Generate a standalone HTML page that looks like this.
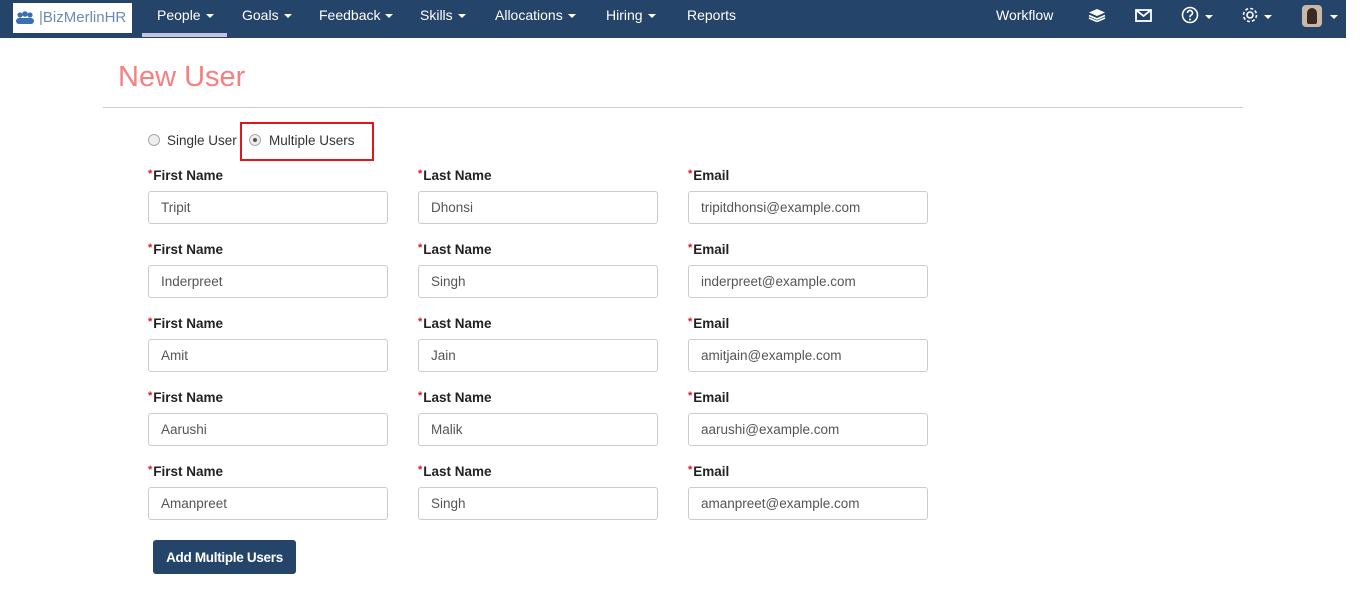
<!DOCTYPE html>
<html><head><meta charset="utf-8"><style>
*{box-sizing:border-box;margin:0;padding:0}
body{width:1360px;height:593px;background:#fff;font-family:"Liberation Sans",sans-serif;position:relative;overflow:hidden}
.nav{position:absolute;left:0;top:0;width:1346px;height:38px;background:#244469}
.logo{position:absolute;left:13px;top:3px;width:119px;height:30px;background:#fff;color:#6b8bb5;font-size:15px;line-height:30px;padding-left:26px}
.nav .i{position:absolute;top:0;line-height:31px;color:#fff;font-size:14px}
.car{display:inline-block;border-left:4px solid transparent;border-right:4px solid transparent;border-top:4px solid #fff;vertical-align:middle;margin-left:5px}
.ul{position:absolute;left:142px;top:33px;width:85px;height:4px;background:#c0c3e3}
h1{position:absolute;left:118px;top:61px;font-weight:normal;font-size:29px;color:#f77f7f}
.hr{position:absolute;left:103px;top:107px;width:1140px;height:1px;background:#ccc}
.rad{position:absolute;top:134px;width:12px;height:12px;border-radius:50%;border:1px solid #aaa;background:#eee}
.rl{position:absolute;top:133px;font-size:13.5px;color:#333}
.box{position:absolute;left:240px;top:122px;width:134px;height:39px;border:2px solid #e0161e}
.lb{position:absolute;font-size:13.5px;font-weight:bold;color:#222}
.lb b{color:#e0161e;font-size:11px;position:relative;top:-3px;margin-right:1px}
.in{position:absolute;width:240px;height:33px;border:1px solid #ccc;border-radius:3px;font-size:13.5px;color:#555;padding-left:12px;line-height:32px}
.btn{position:absolute;left:153px;top:540px;width:143px;height:34px;background:#244469;border-radius:3px;color:#fff;font-weight:bold;font-size:13.5px;line-height:35px;text-align:center;letter-spacing:-.3px}
</style></head><body>
<div class="nav">
<div class="logo"><svg style="position:absolute;left:2px;top:8px" width="20" height="14"><circle cx="5" cy="4" r="2.6" fill="#3a6fb0"/><circle cx="10" cy="3" r="2.8" fill="#3a6fb0"/><circle cx="15" cy="4" r="2.6" fill="#3a6fb0"/><rect x="1" y="7" width="18" height="6" rx="3" fill="#3a6fb0"/></svg>|BizMerlinHR</div>
<div class="ul"></div>
<span class="i" style="left:157px">People<span class="car"></span></span>
<span class="i" style="left:242px">Goals<span class="car"></span></span>
<span class="i" style="left:319px">Feedback<span class="car"></span></span>
<span class="i" style="left:420px">Skills<span class="car"></span></span>
<span class="i" style="left:495px">Allocations<span class="car"></span></span>
<span class="i" style="left:606px">Hiring<span class="car"></span></span>
<span class="i" style="left:687px">Reports</span>
<span class="i" style="left:996px">Workflow</span>
<svg style="position:absolute;left:1088px;top:8px" width="18" height="14"><path d="M9 1 L17 4.5 L9 8 L1 4.5Z" fill="#fff"/><path d="M1 7.5 L9 11 L17 7.5" stroke="#fff" stroke-width="1.6" fill="none"/><path d="M1 10 L9 13.5 L17 10" stroke="#fff" stroke-width="1.6" fill="none"/></svg>
<svg style="position:absolute;left:1135px;top:9px" width="17" height="13"><rect x="1" y="1" width="15" height="11" fill="none" stroke="#fff" stroke-width="1.8"/><path d="M1 1 L8.5 7 L16 1" stroke="#fff" stroke-width="1.8" fill="none"/></svg>
<svg style="position:absolute;left:1181px;top:6px" width="20" height="20"><circle cx="9" cy="9" r="7.5" fill="none" stroke="#fff" stroke-width="1.6"/><path d="M6.5 7a2.5 2.5 0 1 1 3.3 2.3c-.8.4-.8 1-.8 2" stroke="#fff" stroke-width="1.6" fill="none"/><circle cx="9" cy="13.5" r="1" fill="#fff"/></svg>
<span class="car" style="position:absolute;left:1200px;top:15px"></span>
<svg style="position:absolute;left:1241px;top:6px" width="20" height="20"><circle cx="9" cy="9" r="3" fill="none" stroke="#fff" stroke-width="1.6"/><circle cx="9" cy="9" r="6.5" fill="none" stroke="#fff" stroke-width="1.6" stroke-dasharray="3 2.1"/></svg>
<span class="car" style="position:absolute;left:1259px;top:15px"></span>
<div style="position:absolute;left:1302px;top:5px;width:20px;height:22px;border-radius:4px;background:#c9b9a8"><div style="margin:3px 5px;width:10px;height:16px;background:#3a2a22;border-radius:5px 5px 2px 2px"></div></div>
<span class="car" style="position:absolute;left:1325px;top:15px"></span>
</div>
<h1>New User</h1>
<div class="hr"></div>
<div class="rad" style="left:148px"></div><span class="rl" style="left:167px">Single User</span>
<div class="rad" style="left:249px"><div style="width:4px;height:4px;border-radius:50%;background:#555;margin:3px"></div></div><span class="rl" style="left:269px">Multiple Users</span>
<div class="box"></div>
<div id="f"></div>
<script>
var d=[["Tripit","Dhonsi","tripitdhonsi@example.com"],["Inderpreet","Singh","inderpreet@example.com"],["Amit","Jain","amitjain@example.com"],["Aarushi","Malik","aarushi@example.com"],["Amanpreet","Singh","amanpreet@example.com"]];
var L=["First Name","Last Name","Email"],X=[148,418,688],h="";
d.forEach(function(r,i){var y=168+i*74;r.forEach(function(v,j){h+='<div class="lb" style="left:'+X[j]+'px;top:'+y+'px"><b>*</b>'+L[j]+'</div><div class="in" style="left:'+X[j]+'px;top:'+(y+23)+'px">'+v+'</div>';});});
document.getElementById("f").innerHTML=h;
</script>
<div class="btn">Add Multiple Users</div>
</body></html>
